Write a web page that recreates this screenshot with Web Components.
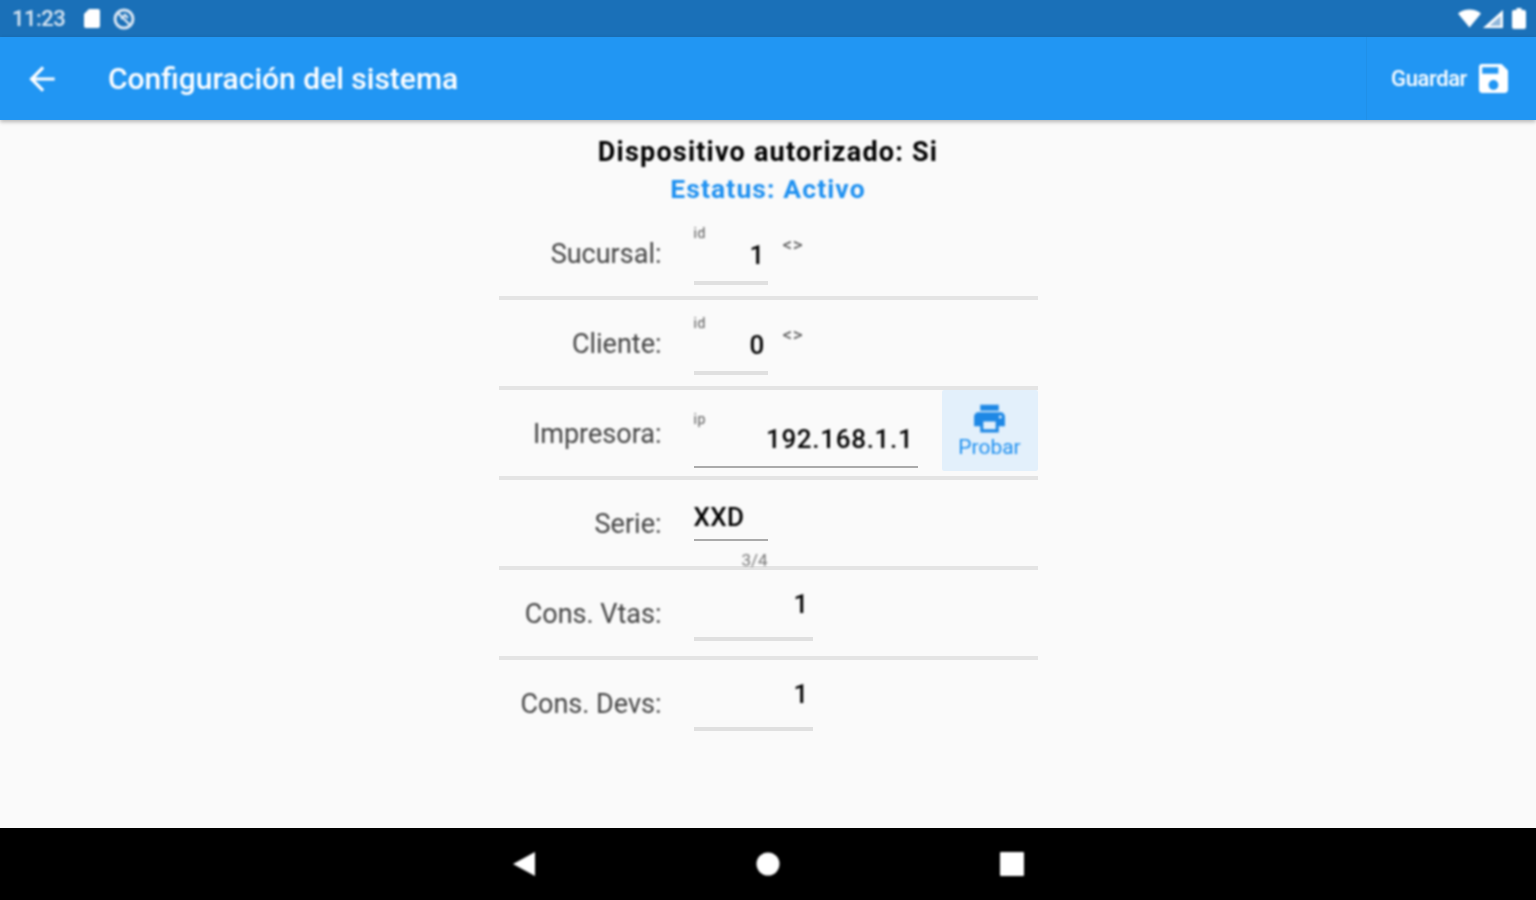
<!DOCTYPE html>
<html lang="es">
<head>
<meta charset="utf-8">
<title>Configuración del sistema</title>
<style>
  html, body { margin: 0; height: 100%; background: #fafafa; font-family: Roboto, "Liberation Sans", sans-serif; }
</style>
</head>
<body>
<config-screen>
  <status-bar slot="status" time="11:23"></status-bar>
  <app-bar slot="bar" title="Configuración del sistema" action="Guardar"></app-bar>

  <div slot="head">Dispositivo autorizado: Si</div>
  <div slot="head" class="status">Estatus: Activo</div>

  <config-row slot="rows" label="Sucursal:">
    <text-field hint="id" value="1" suffix="<>" style="--w:74px;--top:16px;--bottom:11px;--end:3px"></text-field>
  </config-row>
  <config-row slot="rows" label="Cliente:">
    <text-field hint="id" value="0" suffix="<>" style="--w:74px;--top:16px;--bottom:11px;--end:3px"></text-field>
  </config-row>
  <config-row slot="rows" label="Impresora:">
    <text-field hint="ip" value="192.168.1.1" style="--w:224px;--top:22px;--bottom:12px;--end:4px;--line:2px;--line-color:#aaa;--gap:-2px;--track:.7px"></text-field>
    <test-button slot="action">Probar</test-button>
  </config-row>
  <config-row slot="rows" label="Serie:">
    <text-field value="XXD" counter="3/4" left style="--w:74px;--top:22px;--bottom:7px;--line:2px;--line-color:#aaa"></text-field>
  </config-row>
  <config-row slot="rows" label="Cons. Vtas:">
    <text-field value="1" style="--w:119px;--top:19px;--bottom:18px;--end:4px"></text-field>
  </config-row>
  <config-row slot="rows" label="Cons. Devs:" last>
    <text-field value="1" style="--w:119px;--top:19px;--bottom:18px;--end:4px"></text-field>
  </config-row>

  <nav-bar slot="nav"></nav-bar>
</config-screen>

<script>
// la captura original viene desenfocada: el blur va solo sobre textos e iconos, no sobre lineas ni fondos
class ConfigScreen extends HTMLElement {
  constructor() {
    super();
    this.attachShadow({ mode: 'open' }).innerHTML = `
      <style>
        :host { display: flex; flex-direction: column; height: 900px; overflow: hidden; background: #fafafa; }
        main { flex: 1; display: flex; flex-direction: column; align-items: center; padding-top: 13px; min-height: 0; }
        .head { display: flex; flex-direction: column; align-items: center; height: 77px; }
        ::slotted([slot=head]) { font: 700 27px/38px Roboto, sans-serif; letter-spacing: 1.2px; color: #000; filter: blur(.8px); }
        ::slotted(.status) { font-size: 26.500px; line-height: 38px; margin-top: -1px; letter-spacing: 1.100px; color: #1e90f0; }
        .rows { width: 539px; display: flex; flex-direction: column; }
      </style>
      <slot name="status"></slot>
      <slot name="bar"></slot>
      <main>
        <div class="head"><slot name="head"></slot></div>
        <div class="rows"><slot name="rows"></slot></div>
      </main>
      <slot name="nav"></slot>`;
  }
}

class StatusBar extends HTMLElement {
  constructor() {
    super();
    const time = this.getAttribute('time');
    this.attachShadow({ mode: 'open' }).innerHTML = `
      <style>
        :host { display: flex; align-items: center; height: 37px; flex: none; background: #1a70b8; padding: 0 10px 0 12px; color: #fff; }
        .time { font: 500 22px/37px Roboto, sans-serif; color: #d9e6f2; width: 52px; letter-spacing: -.5px; filter: blur(.8px); }
        .left { display: flex; align-items: center; margin-left: 20px; gap: 12px; filter: blur(.8px); }
        .right { margin-left: auto; display: flex; align-items: center; gap: 1px; filter: blur(.8px); }
        svg { display: block; }
      </style>
      <span class="time">${time}</span>
      <div class="left">
        <svg width="16" height="19" viewBox="0 0 16 19"><path fill="#fff" d="M5 0h9a2 2 0 0 1 2 2v15a2 2 0 0 1-2 2H2a2 2 0 0 1-2-2V5z"/></svg>
        <svg width="24" height="24" viewBox="0 0 24 24" fill="none" stroke="#dbe7f3"><circle cx="12" cy="12" r="9" stroke-width="3"/><path stroke-width="2.400" d="M6.500 6.500l11 11M9 12l4-4 3 3"/></svg>
      </div>
      <div class="right">
        <svg width="23" height="19" viewBox="0 0 23 19"><path fill="#fff" d="M11.500 18.500 0 4.500C3 2 7 .5 11.500 .5S20 2 23 4.500z"/></svg>
        <svg width="22" height="20" viewBox="0 0 22 20" style="margin-right:7px"><path fill="#8fb6da" d="M21 1v18H1z"/><path fill="#fff" d="M21 1v18H1zM18.500 7 7.500 16.800h11z" fill-rule="evenodd"/></svg>
        <svg width="14" height="21" viewBox="0 0 14 21"><path fill="#fff" d="M4.500 0h5v2H12a2 2 0 0 1 2 2v15a2 2 0 0 1-2 2H2a2 2 0 0 1-2-2V4a2 2 0 0 1 2-2h2.500z"/></svg>
      </div>`;
  }
}

class AppBar extends HTMLElement {
  constructor() {
    super();
    const title = this.getAttribute('title');
    const action = this.getAttribute('action');
    this.attachShadow({ mode: 'open' }).innerHTML = `
      <style>
        :host { display: flex; align-items: center; height: 83px; flex: none; background: #2196f3; color: #fff; box-shadow: 0 2px 4px rgba(0,0,0,.28); position: relative; z-index: 1; }
        .back { margin-left: 23px; display: block; filter: blur(.8px); }
        h1 { margin: 1px 0 0 47px; font: 500 30px/82px Roboto, sans-serif; flex: 1; letter-spacing: 0; filter: blur(.8px); }
        .action { align-self: stretch; display: flex; align-items: center; padding: 0 28px 0 24px; border-left: 1px solid #2090e8; }
        .action span { font: 500 22px/1 Roboto, sans-serif; letter-spacing: -.4px; margin-right: 12px; filter: blur(.8px); }
        .action svg { display: block; margin-top: -1px; filter: blur(.8px); }
      </style>
      <svg class="back" width="38" height="38" viewBox="0 0 24 24"><path fill="#fff" d="M20 11H7.830l5.590-5.590L12 4l-8 8 8 8 1.410-1.410L7.830 13H20v-2z"/></svg>
      <h1>${title}</h1>
      <div class="action"><span>${action}</span>
        <svg width="29" height="29" viewBox="3 3 18 18"><path fill="#fff" d="M17 3H5a2 2 0 0 0-2 2v14c0 1.100.9 2 2 2h14c1.100 0 2-.9 2-2V7l-4-4zm-5 16c-1.660 0-3-1.340-3-3s1.340-3 3-3 3 1.340 3 3-1.340 3-3 3zm3-10H5V5h10v4z"/></svg>
      </div>`;
  }
}

// fila etiqueta + campo + accion opcional
class ConfigRow extends HTMLElement {
  constructor() {
    super();
    this.attachShadow({ mode: 'open' }).innerHTML = `
      <style>
        :host { display: grid; grid-template-columns: 163px minmax(0, 1fr) auto; height: 86px; border-bottom: 4px solid #e4e4e4; }
        :host([last]) { border-bottom-color: transparent; }
        .label { align-self: center; text-align: right; font: 400 27px/32px Roboto, sans-serif; color: #444; margin-top: 1px; white-space: nowrap; filter: blur(.8px); }
        .field { padding-left: 32px; }
        slot[name=action]::slotted(*) { align-self: start; }
      </style>
      <div class="label">${this.getAttribute('label')}</div>
      <div class="field"><slot></slot></div>
      <slot name="action"></slot>`;
  }
}

class TextField extends HTMLElement {
  constructor() {
    super();
    const hint = this.getAttribute('hint');
    const suffix = this.getAttribute('suffix');
    const counter = this.getAttribute('counter');
    const esc = s => s.replace(/</g, '&lt;').replace(/>/g, '&gt;');
    this.attachShadow({ mode: 'open' }).innerHTML = `
      <style>
        :host { display: flex; align-items: flex-start; }
        .box { width: var(--w); display: flex; flex-direction: column; padding-top: var(--top); }
        .hint { font: 400 14px/14px Roboto, sans-serif; color: #555; letter-spacing: .5px; margin-bottom: var(--gap, 0); filter: blur(.8px); }
        .value { font: 500 26px/30px Roboto, sans-serif; color: #000; text-align: ${this.hasAttribute('left') ? 'left' : 'right'}; padding-right: var(--end, 0); padding-bottom: var(--bottom); border-bottom: var(--line, 4px) solid var(--line-color, #e0e0e0); letter-spacing: var(--track, .3px); }
        .value span { display: inline-block; filter: blur(.8px); }
        .counter { font: 400 17px/14px Roboto, sans-serif; color: #777; text-align: right; margin-top: 12px; filter: blur(.8px); }
        .suffix { font: 400 19px/14px Roboto, sans-serif; color: #444; margin: 28px 0 0 15px; letter-spacing: .5px; filter: blur(.8px); }
      </style>
      <div class="box">
        ${hint ? `<div class="hint">${hint}</div>` : ''}
        <div class="value"><span>${this.getAttribute('value')}</span></div>
        ${counter ? `<div class="counter">${counter}</div>` : ''}
      </div>
      ${suffix ? `<div class="suffix">${esc(suffix)}</div>` : ''}`;
  }
}

class TestButton extends HTMLElement {
  constructor() {
    super();
    this.attachShadow({ mode: 'open' }).innerHTML = `
      <style>
        :host { display: flex; flex-direction: column; align-items: center; width: 96px; height: 81px; box-sizing: border-box; padding-top: 10px; background: #e3f0fb; color: #1e90f0; border-radius: 2px; font: 400 21px/20px Roboto, sans-serif; }
        svg { display: block; filter: blur(.8px); }
        span { filter: blur(.8px); }
      </style>
      <svg width="37" height="37" viewBox="0 0 24 24"><path fill="#1e88e5" d="M19 8H5c-1.660 0-3 1.340-3 3v6h4v4h12v-4h4v-6c0-1.660-1.340-3-3-3zm-3 11H8v-5h8v5zm3-7c-.55 0-1-.45-1-1s.45-1 1-1 1 .45 1 1-.45 1-1 1zm-1-9H6v4h12V3z"/></svg>
      <span><slot></slot></span>`;
  }
}

class NavBar extends HTMLElement {
  constructor() {
    super();
    this.attachShadow({ mode: 'open' }).innerHTML = `
      <style>
        :host { display: flex; justify-content: center; align-items: center; gap: 220px; height: 72px; flex: none; background: #000; }
        svg { display: block; filter: blur(.8px); }
      </style>
      <svg width="24" height="26" viewBox="0 0 24 26"><path fill="#fff" d="M23 1v24L1 13z"/></svg>
      <svg width="24" height="24" viewBox="0 0 24 24"><circle cx="12" cy="12" r="11.500" fill="#fff"/></svg>
      <svg width="24" height="24" viewBox="0 0 24 24"><rect width="24" height="24" rx="1" fill="#fff"/></svg>`;
  }
}

customElements.define('config-screen', ConfigScreen);
customElements.define('status-bar', StatusBar);
customElements.define('app-bar', AppBar);
customElements.define('config-row', ConfigRow);
customElements.define('text-field', TextField);
customElements.define('test-button', TestButton);
customElements.define('nav-bar', NavBar);
</script>
</body>
</html>
